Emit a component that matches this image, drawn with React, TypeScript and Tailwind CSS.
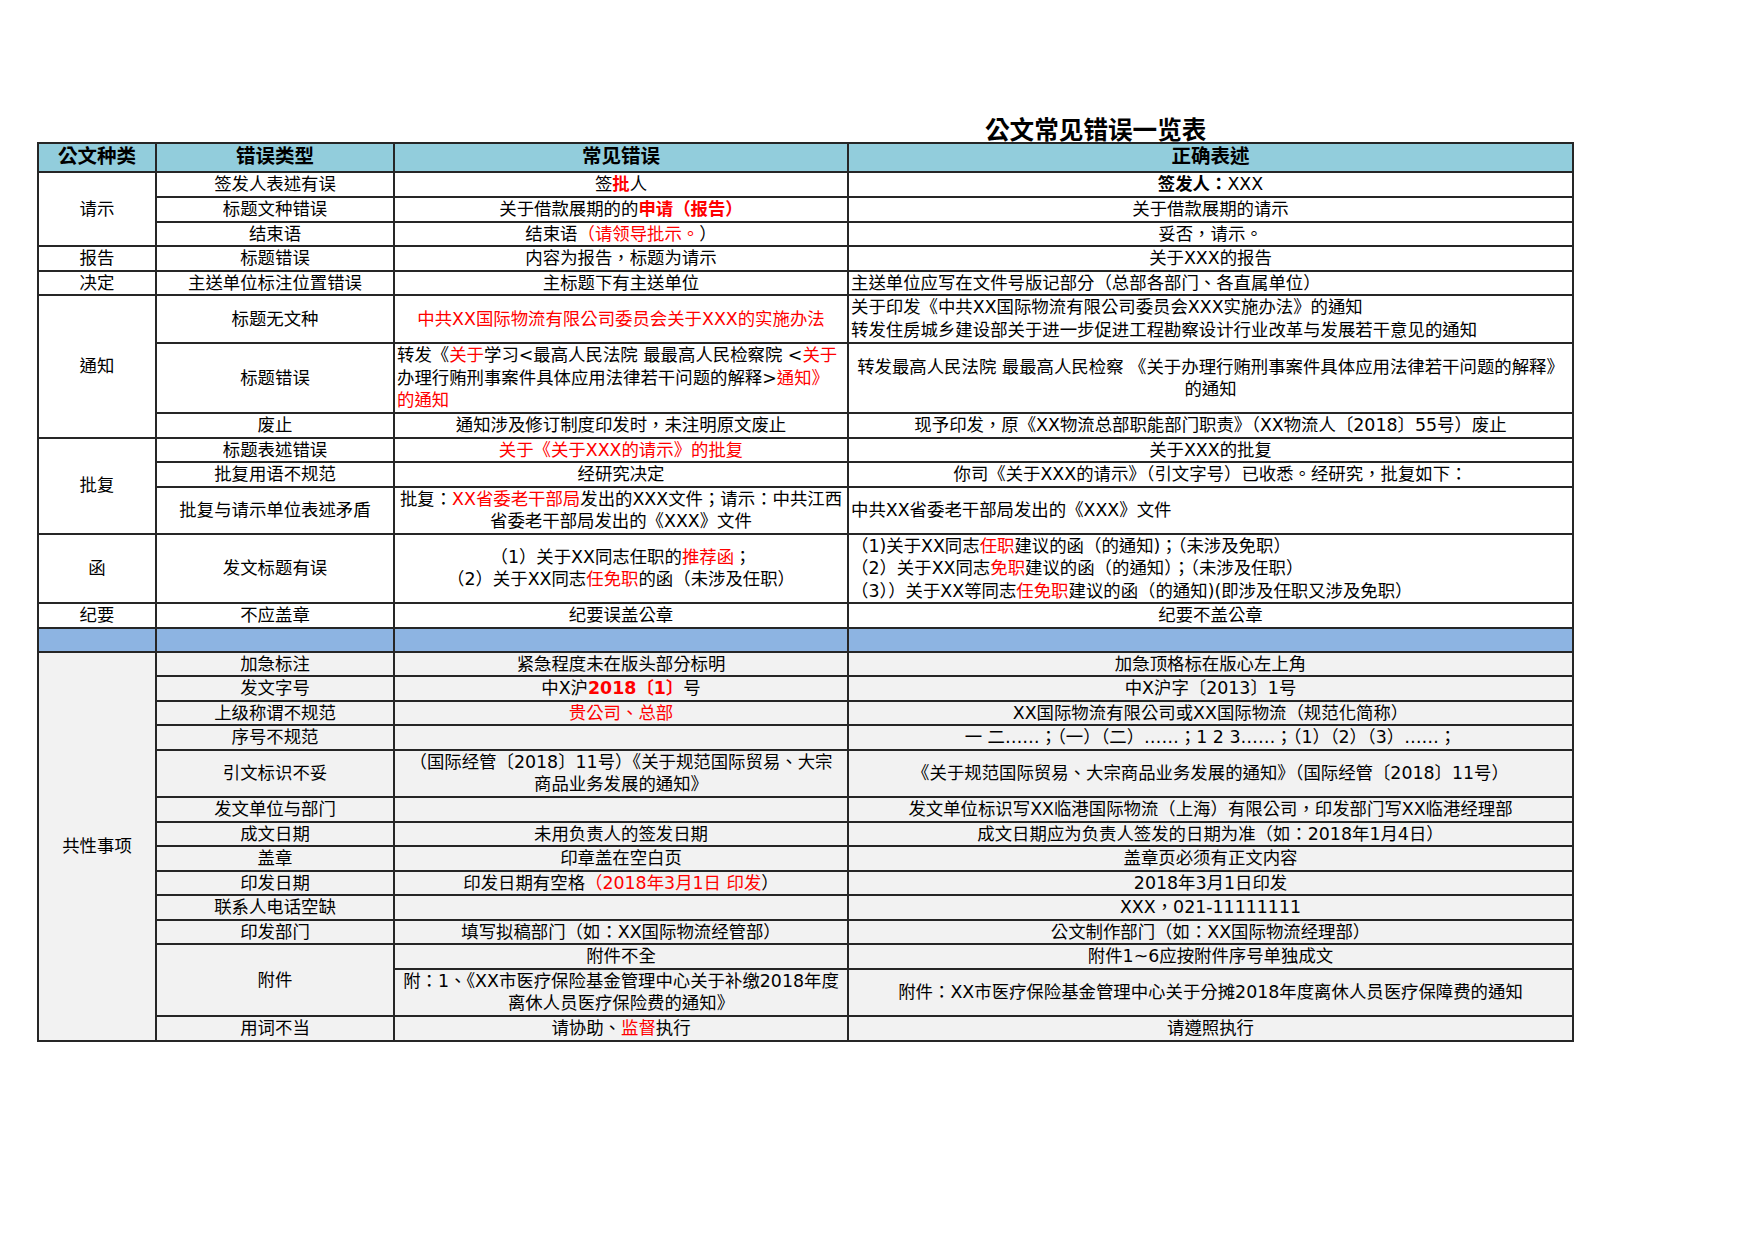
import React from 'react'

function R({ children, bold = false }: { children: React.ReactNode; bold?: boolean }) {
  return <span className={bold ? 'text-[#ff0000] font-bold' : 'text-[#ff0000]'}>{children}</span>
}

const cell = 'border-2 border-[#262626] px-[2px] text-center align-middle whitespace-nowrap'
const left = 'border-2 border-[#262626] px-[2px] text-left align-middle whitespace-nowrap'

export default function App() {
  return (
    <div className="w-[1754px] h-[1240px] bg-white pt-[114px] pl-[37px] text-black font-['DejaVu_Sans','Noto_Sans_CJK_TC',sans-serif] text-[17.4px] leading-[22.5px]">
      <div className="ml-[948px] h-[28px] text-[24.6px] leading-[28px] font-bold font-['Noto_Sans_CJK_TC',sans-serif]">
        公文常见错误一览表
      </div>
      <table className="table-fixed border-collapse w-[1535px]">
        <colgroup>
          <col className="w-[118px]" />
          <col className="w-[238px]" />
          <col className="w-[454px]" />
          <col className="w-[725px]" />
        </colgroup>
        <thead>
          <tr className="h-[29px] bg-[#92cddc] text-[19.5px] font-bold">
            <th className={cell}>公文种类</th>
            <th className={cell}>错误类型</th>
            <th className={cell}>常见错误</th>
            <th className={cell}>正确表述</th>
          </tr>
        </thead>
        <tbody>
          <tr className="h-[25px]">
            <td className={cell} rowSpan={3}>请示</td>
            <td className={cell}>签发人表述有误</td>
            <td className={cell}>签<R bold>批</R>人</td>
            <td className={cell}><span className="font-bold">签发人：</span>XXX</td>
          </tr>
          <tr className="h-[24.5px]">
            <td className={cell}>标题文种错误</td>
            <td className={cell}>关于借款展期的的<R bold>申请（报告）</R></td>
            <td className={cell}>关于借款展期的请示</td>
          </tr>
          <tr className="h-[24.5px]">
            <td className={cell}>结束语</td>
            <td className={cell}>结束语<R>（请领导批示。</R>）</td>
            <td className={cell}>妥否，请示。</td>
          </tr>
          <tr className="h-[24.5px]">
            <td className={cell}>报告</td>
            <td className={cell}>标题错误</td>
            <td className={cell}>内容为报告，标题为请示</td>
            <td className={cell}>关于XXX的报告</td>
          </tr>
          <tr className="h-[24.5px]">
            <td className={cell}>决定</td>
            <td className={cell}>主送单位标注位置错误</td>
            <td className={cell}>主标题下有主送单位</td>
            <td className={left}>主送单位应写在文件号版记部分（总部各部门、各直属单位）</td>
          </tr>

          <tr className="h-[47.5px]">
            <td className={cell} rowSpan={3}>通知</td>
            <td className={cell}>标题无文种</td>
            <td className={cell}><R>中共XX国际物流有限公司委员会关于XXX的实施办法</R></td>
            <td className={`${left} leading-[23px]`}>
              关于印发《中共XX国际物流有限公司委员会XXX实施办法》的通知
              <br />
              转发住房城乡建设部关于进一步促进工程勘察设计行业改革与发展若干意见的通知
            </td>
          </tr>
          <tr className="h-[70px]">
            <td className={cell}>标题错误</td>
            <td className={left}>
              转发《<R>关于</R>学习&lt;最高人民法院 最最高人民检察院 &lt;<R>关于</R>
              <br />
              办理行贿刑事案件具体应用法律若干问题的解释&gt;<R>通知》</R>
              <br />
              <R>的通知</R>
            </td>
            <td className={cell}>
              转发最高人民法院 最最高人民检察 《关于办理行贿刑事案件具体应用法律若干问题的解释》
              <br />
              的通知
            </td>
          </tr>
          <tr className="h-[24px]">
            <td className={cell}>废止</td>
            <td className={cell}>通知涉及修订制度印发时，未注明原文废止</td>
            <td className={cell}>现予印发，原《XX物流总部职能部门职责》（XX物流人〔2018〕55号）废止</td>
          </tr>

          <tr className="h-[24.5px]">
            <td className={cell} rowSpan={3}>批复</td>
            <td className={cell}>标题表述错误</td>
            <td className={cell}><R>关于《关于XXX的请示》的批复</R></td>
            <td className={cell}>关于XXX的批复</td>
          </tr>
          <tr className="h-[24.5px]">
            <td className={cell}>批复用语不规范</td>
            <td className={cell}>经研究决定</td>
            <td className={cell}>你司《关于XXX的请示》（引文字号）已收悉。经研究，批复如下：</td>
          </tr>
          <tr className="h-[47px]">
            <td className={cell}>批复与请示单位表述矛盾</td>
            <td className={cell}>
              批复：<R>XX省委老干部局</R>发出的XXX文件；请示：中共江西
              <br />
              省委老干部局发出的《XXX》文件
            </td>
            <td className={left}>中共XX省委老干部局发出的《XXX》文件</td>
          </tr>

          <tr className="h-[68.5px]">
            <td className={cell}>函</td>
            <td className={cell}>发文标题有误</td>
            <td className={cell}>
              （1）关于XX同志任职的<R>推荐函</R>；
              <br />
              （2）关于XX同志<R>任免职</R>的函（未涉及任职）
            </td>
            <td className={left}>
              （1)关于XX同志<R>任职</R>建议的函（的通知)；（未涉及免职）
              <br />
              （2）关于XX同志<R>免职</R>建议的函（的通知）；（未涉及任职）
              <br />
              （3））关于XX等同志<R>任免职</R>建议的函（的通知)(即涉及任职又涉及免职）
            </td>
          </tr>
          <tr className="h-[24.5px]">
            <td className={cell}>纪要</td>
            <td className={cell}>不应盖章</td>
            <td className={cell}>纪要误盖公章</td>
            <td className={cell}>纪要不盖公章</td>
          </tr>
          <tr className="h-[24px] bg-[#8db4e2]">
            <td className={cell}></td>
            <td className={cell}></td>
            <td className={cell}></td>
            <td className={cell}></td>
          </tr>

          <tr className="h-[24.5px] bg-[#f2f2f2]">
            <td className={cell} rowSpan={14}>共性事项</td>
            <td className={cell}>加急标注</td>
            <td className={cell}>紧急程度未在版头部分标明</td>
            <td className={cell}>加急顶格标在版心左上角</td>
          </tr>
          <tr className="h-[24.5px] bg-[#f2f2f2]">
            <td className={cell}>发文字号</td>
            <td className={cell}>中X沪<R bold>2018〔1〕</R>号</td>
            <td className={cell}>中X沪字〔2013〕1号</td>
          </tr>
          <tr className="h-[24.5px] bg-[#f2f2f2]">
            <td className={cell}>上级称谓不规范</td>
            <td className={cell}><R>贵公司、总部</R></td>
            <td className={cell}>XX国际物流有限公司或XX国际物流（规范化简称）</td>
          </tr>
          <tr className="h-[24.5px] bg-[#f2f2f2]">
            <td className={cell}>序号不规范</td>
            <td className={cell}></td>
            <td className={cell}>一 二……；（一）（二）……；1 2 3……；（1）（2）（3）……；</td>
          </tr>
          <tr className="h-[47.5px] bg-[#f2f2f2]">
            <td className={cell}>引文标识不妥</td>
            <td className={cell}>
              （国际经管〔2018〕11号）《关于规范国际贸易、大宗
              <br />
              商品业务发展的通知》
            </td>
            <td className={cell}>《关于规范国际贸易、大宗商品业务发展的通知》（国际经管〔2018〕11号）</td>
          </tr>
          <tr className="h-[24.5px] bg-[#f2f2f2]">
            <td className={cell}>发文单位与部门</td>
            <td className={cell}></td>
            <td className={cell}>发文单位标识写XX临港国际物流（上海）有限公司，印发部门写XX临港经理部</td>
          </tr>
          <tr className="h-[24.5px] bg-[#f2f2f2]">
            <td className={cell}>成文日期</td>
            <td className={cell}>未用负责人的签发日期</td>
            <td className={cell}>成文日期应为负责人签发的日期为准（如：2018年1月4日）</td>
          </tr>
          <tr className="h-[24.5px] bg-[#f2f2f2]">
            <td className={cell}>盖章</td>
            <td className={cell}>印章盖在空白页</td>
            <td className={cell}>盖章页必须有正文内容</td>
          </tr>
          <tr className="h-[24.5px] bg-[#f2f2f2]">
            <td className={cell}>印发日期</td>
            <td className={cell}>印发日期有空格<R>（2018年3月1日 印发</R>）</td>
            <td className={cell}>2018年3月1日印发</td>
          </tr>
          <tr className="h-[24.5px] bg-[#f2f2f2]">
            <td className={cell}>联系人电话空缺</td>
            <td className={cell}></td>
            <td className={cell}>XXX，021-11111111</td>
          </tr>
          <tr className="h-[24.5px] bg-[#f2f2f2]">
            <td className={cell}>印发部门</td>
            <td className={cell}>填写拟稿部门（如：XX国际物流经管部）</td>
            <td className={cell}>公文制作部门（如：XX国际物流经理部）</td>
          </tr>
          <tr className="h-[24.5px] bg-[#f2f2f2]">
            <td className={cell} rowSpan={2}>附件</td>
            <td className={cell}>附件不全</td>
            <td className={cell}>附件1~6应按附件序号单独成文</td>
          </tr>
          <tr className="h-[47.5px] bg-[#f2f2f2]">
            <td className={cell}>
              附：1、《XX市医疗保险基金管理中心关于补缴2018年度
              <br />
              离休人员医疗保险费的通知》
            </td>
            <td className={cell}>附件：XX市医疗保险基金管理中心关于分摊2018年度离休人员医疗保障费的通知</td>
          </tr>
          <tr className="h-[23px] bg-[#f2f2f2]">
            <td className={cell}>用词不当</td>
            <td className={cell}>请协助、<R>监督</R>执行</td>
            <td className={cell}>请遵照执行</td>
          </tr>
        </tbody>
      </table>
    </div>
  )
}
